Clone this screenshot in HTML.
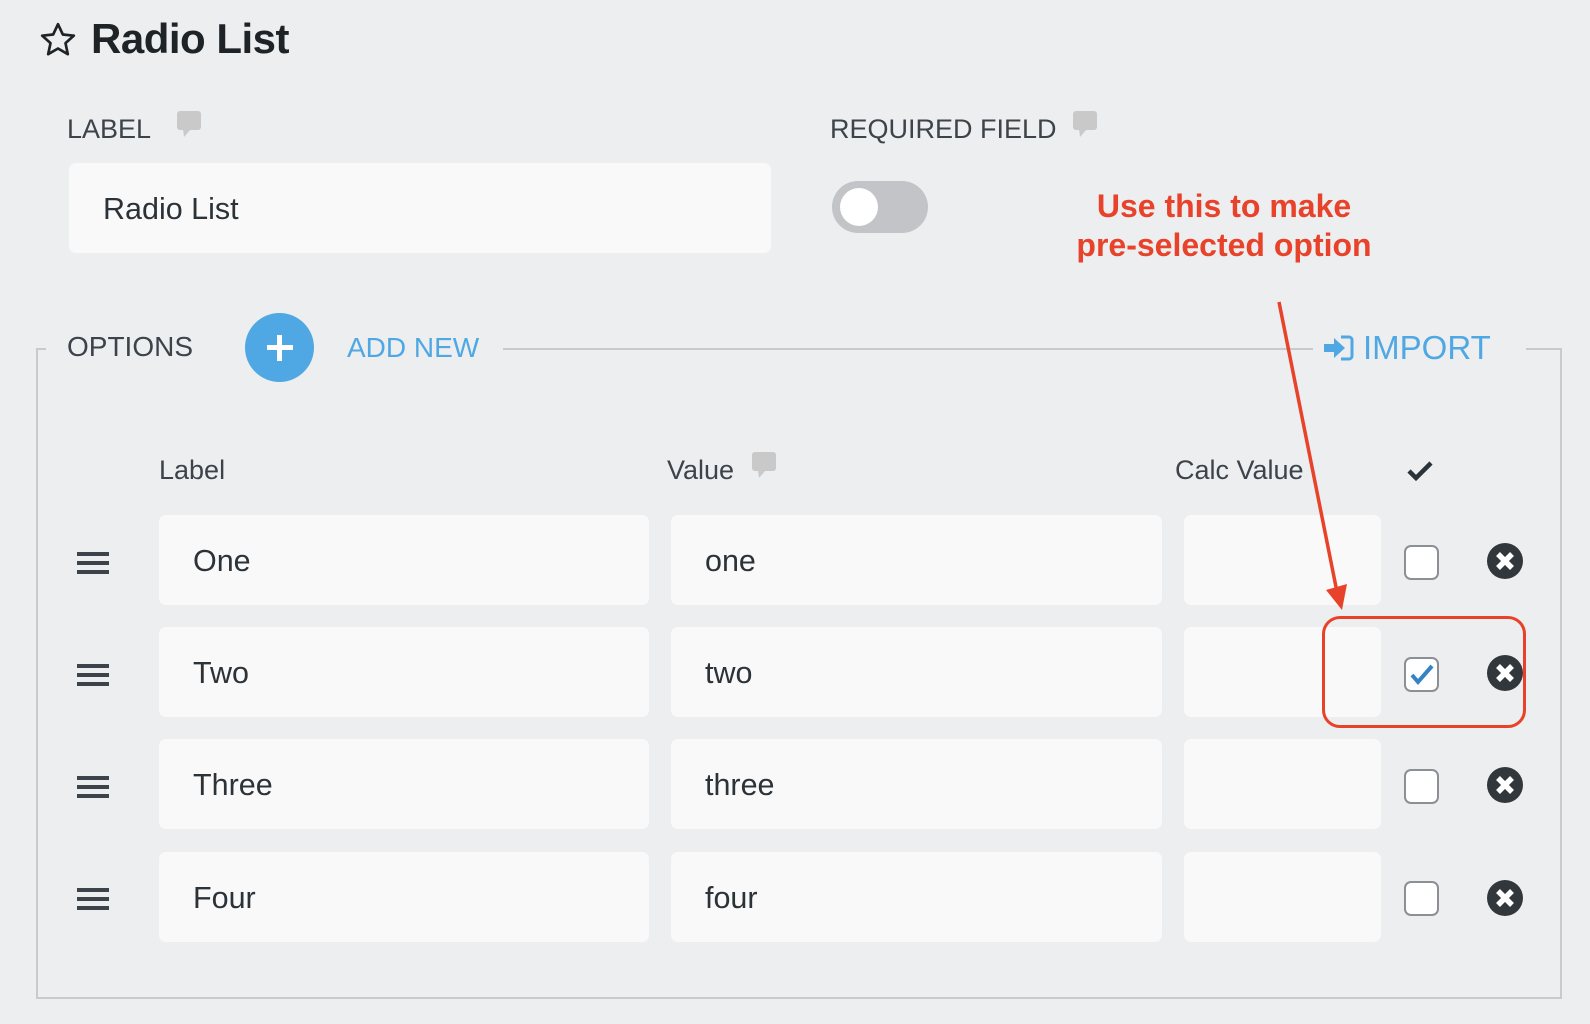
<!DOCTYPE html>
<html><head><style>
body{margin:0;width:1590px;height:1024px;background:#edeef0;font-family:"Liberation Sans",sans-serif;color:#32373c;position:relative;overflow:hidden}
.a{position:absolute}
.inp{position:absolute;background:#f9f9f9;border-radius:7px;height:90px}
.inp span{position:absolute;left:34px;top:29px;font-size:30.5px;color:#2c3338}
.cb{position:absolute;width:31px;height:31px;border:2px solid #8c8f94;border-radius:7px;background:#fff;left:1404px}
.x{position:absolute;left:1487px;width:36px;height:36px}
.hb{position:absolute;left:77px;width:32px}
.hb i{display:block;height:4px;background:#3c434a;margin-bottom:5px}
.hd{position:absolute;font-size:27px;top:455px;color:#3c434a}
</style></head><body>
<svg class="a" style="left:38px;top:20px" width="40" height="40" viewBox="0 0 24 24"><path d="M12 2.5l2.9 6.2 6.6.7-5 4.5 1.4 6.6L12 17.1l-5.9 3.4 1.4-6.6-5-4.5 6.6-.7z" fill="none" stroke="#1d2327" stroke-width="1.6" stroke-linejoin="round"/></svg>
<div class="a" style="left:91px;top:15px;font-size:42px;font-weight:bold;color:#1d2327;letter-spacing:-0.5px">Radio List</div>
<div class="a" style="left:67px;top:114px;font-size:27px;color:#3c434a">LABEL</div>
<svg class="a" style="left:177px;top:111px" width="24" height="28" viewBox="0 0 24 28"><rect x="0" y="0" width="24" height="19" rx="3" fill="#c9c9c9"/><path d="M6 18h8l-7 8z" fill="#c9c9c9"/></svg>
<div class="inp" style="left:69px;top:163px;width:702px"><span>Radio List</span></div>
<div class="a" style="left:830px;top:114px;font-size:27px;color:#3c434a">REQUIRED FIELD</div>
<svg class="a" style="left:1073px;top:111px" width="24" height="28" viewBox="0 0 24 28"><rect x="0" y="0" width="24" height="19" rx="3" fill="#c9c9c9"/><path d="M6 18h8l-7 8z" fill="#c9c9c9"/></svg>
<div class="a" style="left:832px;top:181px;width:96px;height:52px;border-radius:26px;background:#c3c4c7"></div>
<div class="a" style="left:840px;top:188px;width:38px;height:38px;border-radius:50%;background:#fff"></div>
<div class="a" style="left:1000px;top:187px;width:448px;text-align:center;font-size:32px;font-weight:bold;color:#e8432a;line-height:39px">Use this to make<br>pre-selected option</div>
<!-- fieldset -->
<div class="a" style="left:36px;top:348px;width:1522px;height:647px;border:2px solid #c9cacc"></div>
<div class="a" style="left:46px;top:320px;width:1480px;height:60px;background:#edeef0"></div>
<div class="a" style="left:503px;top:348px;width:810px;height:2px;background:#c9cacc"></div>
<div class="a" style="left:67px;top:331px;font-size:28px;color:#3c434a">OPTIONS</div>
<div class="a" style="left:245px;top:313px;width:69px;height:69px;border-radius:50%;background:#4fa8e3"></div>
<div class="a" style="left:267px;top:345px;width:26px;height:5px;background:#fff"></div>
<div class="a" style="left:277px;top:335px;width:5px;height:26px;background:#fff"></div>
<div class="a" style="left:347px;top:332px;font-size:28px;color:#4fa8e3">ADD NEW</div>
<svg class="a" style="left:1323px;top:334px" width="32" height="28" viewBox="0 0 32 28"><path d="M1 10h10V4l11 10-11 10v-6H1z" fill="#4fa8e3"/><path d="M18 3h8a3 3 0 013 3v16a3 3 0 01-3 3h-8" fill="none" stroke="#4fa8e3" stroke-width="3"/></svg>
<div class="a" style="left:1363px;top:329px;font-size:33px;color:#4fa8e3">IMPORT</div>
<div class="hd" style="left:159px">Label</div>
<div class="hd" style="left:667px">Value</div>
<svg class="a" style="left:752px;top:452px" width="24" height="28" viewBox="0 0 24 28"><rect x="0" y="0" width="24" height="19" rx="3" fill="#c9c9c9"/><path d="M6 18h8l-7 8z" fill="#c9c9c9"/></svg>
<div class="hd" style="left:1175px">Calc Value</div>
<svg class="a" style="left:1407px;top:460px" width="26" height="22" viewBox="0 0 26 22"><path d="M2 11l7 7L24 3" fill="none" stroke="#2c3338" stroke-width="4.5"/></svg>

<div class="hb" style="top:552px"><i></i><i></i><i></i></div>
<div class="inp" style="left:159px;top:515px;width:490px"><span>One</span></div>
<div class="inp" style="left:671px;top:515px;width:491px"><span>one</span></div>
<div class="inp" style="left:1184px;top:515px;width:197px"></div>
<div class="cb" style="top:545px"></div>

<div class="hb" style="top:664px"><i></i><i></i><i></i></div>
<div class="inp" style="left:159px;top:627px;width:490px"><span>Two</span></div>
<div class="inp" style="left:671px;top:627px;width:491px"><span>two</span></div>
<div class="inp" style="left:1184px;top:627px;width:197px"></div>
<div class="cb" style="top:657px"><svg width="31" height="31" viewBox="0 0 31 31"><path d="M6 16l6 7L26 7" fill="none" stroke="#3582c4" stroke-width="4"/></svg></div>

<div class="hb" style="top:776px"><i></i><i></i><i></i></div>
<div class="inp" style="left:159px;top:739px;width:490px"><span>Three</span></div>
<div class="inp" style="left:671px;top:739px;width:491px"><span>three</span></div>
<div class="inp" style="left:1184px;top:739px;width:197px"></div>
<div class="cb" style="top:769px"></div>

<div class="hb" style="top:888px"><i></i><i></i><i></i></div>
<div class="inp" style="left:159px;top:852px;width:490px"><span>Four</span></div>
<div class="inp" style="left:671px;top:852px;width:491px"><span>four</span></div>
<div class="inp" style="left:1184px;top:852px;width:197px"></div>
<div class="cb" style="top:881px"></div>

<svg class="x" style="top:543px" viewBox="0 0 36 36"><circle cx="18" cy="18" r="18" fill="#32373c"/><path d="M11 11l14 14M25 11L11 25" stroke="#fff" stroke-width="5.5"/></svg>
<svg class="x" style="top:655px" viewBox="0 0 36 36"><circle cx="18" cy="18" r="18" fill="#32373c"/><path d="M11 11l14 14M25 11L11 25" stroke="#fff" stroke-width="5.5"/></svg>
<svg class="x" style="top:767px" viewBox="0 0 36 36"><circle cx="18" cy="18" r="18" fill="#32373c"/><path d="M11 11l14 14M25 11L11 25" stroke="#fff" stroke-width="5.5"/></svg>
<svg class="x" style="top:880px" viewBox="0 0 36 36"><circle cx="18" cy="18" r="18" fill="#32373c"/><path d="M11 11l14 14M25 11L11 25" stroke="#fff" stroke-width="5.5"/></svg>

<div class="a" style="left:1322px;top:616px;width:198px;height:106px;border:3px solid #e8432a;border-radius:18px"></div>
<svg class="a" style="left:0;top:0" width="1590" height="1024"><line x1="1279" y1="302" x2="1337" y2="592" stroke="#e8432a" stroke-width="3.5"/><path d="M1326 590l16 20 5-26z" fill="#e8432a"/></svg>
</body></html>
